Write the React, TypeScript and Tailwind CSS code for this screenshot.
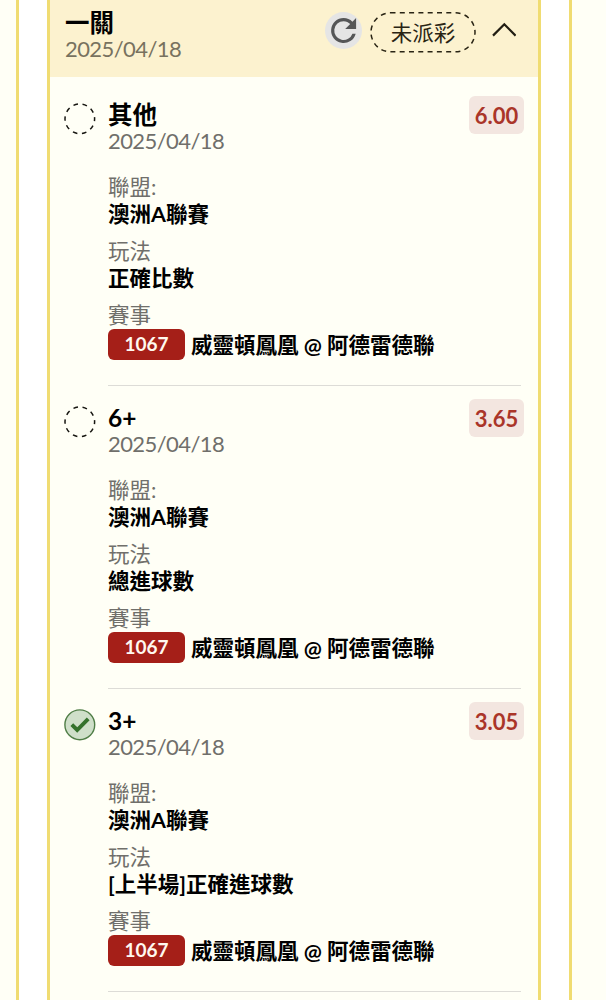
type Bet = { pick: string; odds: string; play: string; won?: boolean };

const bets: Bet[] = [
  { pick: '其他', odds: '6.00', play: '正確比數' },
  { pick: '6+', odds: '3.65', play: '總進球數' },
  { pick: '3+', odds: '3.05', play: '[上半場]正確進球數', won: true },
];

function StatusIcon({ won }: { won?: boolean }) {
  return (
    <svg className="mt-5 ml-[14px] size-8 shrink-0" viewBox="0 0 32 32" fill="none">
      {won ? (
        <>
          <circle cx="15.8" cy="15.8" r="14.9" fill="#cfdfc9" stroke="#4f7d46" strokeWidth="1.4" />
          <path d="M7.8 15.6l5.4 5.4 11-11.2" stroke="#35722c" strokeWidth="3.9" />
        </>
      ) : (
        <circle cx="15.8" cy="15.8" r="14.8" stroke="#15140f" strokeWidth="1.5" strokeDasharray="4.6 4.7" strokeDashoffset="2.3" />
      )}
    </svg>
  );
}

function Field({ label, value }: { label: string; value: string }) {
  return (
    <div className="mb-[11px] h-[53px]">
      <div className="h-[26px] leading-[25px] text-[#706f6b]">{label}</div>
      <div className="h-[27px] leading-[27px] font-bold text-black">{value}</div>
    </div>
  );
}

function BetItem({ bet }: { bet: Bet }) {
  return (
    <section className="flex h-[303px]">
      <StatusIcon won={bet.won} />
      <div className="ml-3 flex w-[413px] flex-col border-b border-[#dddcd7]">
        <div className="flex h-[92px] justify-between">
          <div className="pt-[18px]">
            <div className="h-7 text-[24.5px] leading-7 font-bold text-black">{bet.pick}</div>
            <div className="h-6 text-[22px] leading-6 tracking-[-0.58px] text-[#706f6b]">2025/04/18</div>
          </div>
          <div className="mt-[13px] -mr-[3px] flex h-[38px] w-[55px] items-center justify-center rounded-md bg-[#f3e6e0] text-[22px] font-bold text-[#aa3529]">
            {bet.odds}
          </div>
        </div>
        <Field label="聯盟:" value="澳洲A聯賽" />
        <Field label="玩法" value={bet.play} />
        <div className="h-[26px] leading-[24px] text-[#706f6b]">賽事</div>
        <div className="flex h-[31px] items-center font-bold text-black">
          <span className="flex h-[31px] w-[77px] items-center justify-center rounded-md bg-[#a51f18] text-[19px] text-[#fff8ef]">
            1067
          </span>
          <span className="ml-[6px] pt-[2px] whitespace-nowrap">威靈頓鳳凰 @ 阿德雷德聯</span>
        </div>
      </div>
    </section>
  );
}

export default function App() {
  return (
    <div className="flex h-[1000px] overflow-hidden bg-[#fffff6] pr-[34px] pl-4 font-['Lato','Noto_Sans_CJK_TC',sans-serif] text-[21.5px]">
      <div className="flex w-[556px] border-x-[3px] border-[#f0dc72] bg-white px-7">
        <main className="w-[494px] border-x-[3px] border-[#f0dc72] bg-[#fffff6]">
          <header className="mb-[6px] flex h-[77px] bg-[#fcf2cf]">
            <div className="ml-[15px] w-[260px] pt-[9px]">
              <div className="h-7 text-[24.5px] leading-7 font-bold text-black">一關</div>
              <div className="h-6 text-[22px] leading-6 tracking-[-0.58px] text-[#78725f]">2025/04/18</div>
            </div>
            <svg className="mt-3 size-[37px]" viewBox="0 0 37 37">
              <circle cx="18.5" cy="18.5" r="18.5" fill="#e5e5e5" />
              <path
                transform="translate(-.1 -.2) scale(1.56)"
                d="M17.65 6.35A7.96 7.96 0 0 0 12 4a8 8 0 1 0 7.73 10h-2.08A6 6 0 1 1 12 6c1.66 0 3.14.69 4.22 1.78L13 11h7V4l-2.35 2.35z"
                fill="#555657"
              />
            </svg>
            <div className="mt-3 ml-[8px] grid h-[41px] w-[106px] place-items-center">
              <svg className="col-start-1 row-start-1 h-[41px] w-[106px]" viewBox="0 0 106 41" fill="none">
                <rect x="1" y=".8" width="104" height="39" rx="19.5" stroke="#292414" strokeWidth="1.5" strokeDasharray="5 4.3" />
              </svg>
              <span className="col-start-1 row-start-1 pt-[2px] text-[#292414]">未派彩</span>
            </div>
            <svg className="mt-[21px] ml-4 h-[18px] w-6" viewBox="0 0 24 18" fill="none">
              <path d="M1 14.6L12.3 3.3 23.6 14.6" stroke="#211d12" strokeWidth="2.2" />
            </svg>
          </header>
          {bets.map((bet) => (
            <BetItem key={bet.pick} bet={bet} />
          ))}
        </main>
      </div>
    </div>
  );
}
